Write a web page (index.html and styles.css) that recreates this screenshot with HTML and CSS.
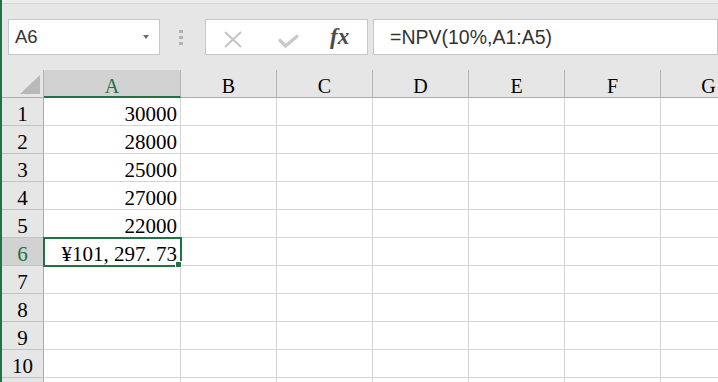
FILE: index.html
```html
<!DOCTYPE html>
<html lang="zh-CN">
<head>
    <meta charset="UTF-8">
    <meta name="viewport" content="width=device-width, initial-scale=1.0">
    <title>NPV</title>
    <link rel="stylesheet" href="styles.css">
</head>
<body>
    <div class="ribbon-edge"></div>
    <div class="formula-bar">
        <div class="name-box">
            <span>A6</span>
            <span class="caret"></span>
        </div>
        <div class="grip"><i></i><i></i><i></i></div>
        <div class="fx-buttons">
            <svg class="cancel" width="18" height="34" viewBox="0 0 18 34">
                <path d="M1 12 L17 27 M17 12 L1 27" stroke="#c4c4c4" stroke-width="2" fill="none"/>
            </svg>
            <svg class="enter" width="21" height="34" viewBox="0 0 21 34">
                <polyline points="1,19.5 7.5,26 20,15.5" stroke="#c9c9c9" stroke-width="3.2" fill="none"/>
            </svg>
            <span class="fx">fx</span>
        </div>
        <div class="formula">=NPV(10%,A1:A5)</div>
    </div>

    <div class="sheet" id="sheet"></div>

    <script>
        const columns = ['A', 'B', 'C', 'D', 'E', 'F', 'G'];
        const data = {
            A1: '30000',
            A2: '28000',
            A3: '25000',
            A4: '27000',
            A5: '22000',
            A6: '¥101, 297. 73'
        };
        const active = { col: 'A', row: 6 };
        const visibleRows = 10;
        const sheet = document.getElementById('sheet');

        function addCell(className, text) {
            const cell = document.createElement('div');
            cell.className = className;
            cell.textContent = text || '';
            sheet.appendChild(cell);
        }

        addCell('corner');
        columns.forEach(col => addCell(col === active.col ? 'col-head active' : 'col-head', col));

        // one extra row peeks in at the bottom edge, without its number
        for (let row = 1; row <= visibleRows + 1; row++) {
            const label = row <= visibleRows ? String(row) : '';
            addCell(row === active.row ? 'row-head active' : 'row-head', label);
            columns.forEach(col => {
                const selected = col === active.col && row === active.row;
                addCell(selected ? 'cell selected' : 'cell', data[col + row]);
            });
        }
    </script>
</body>
</html>
```

FILE: styles.css
```css
body {
    margin: 0;
    width: 718px;
    height: 382px;
    overflow: hidden;
    box-sizing: border-box;
    background: #e6e6e6;
    border-left: 2px solid #217346;
    font-family: "Liberation Sans", Arial, sans-serif;
}
.ribbon-edge {
    height: 3px;
    background: #ececec;
    border-bottom: 1px solid #d4d4d4;
}
.formula-bar {
    display: flex;
    align-items: center;
    height: 66px;
    padding-left: 6px;
}
.name-box {
    width: 152px;
    height: 36px;
    box-sizing: border-box;
    background: white;
    border: 1px solid #c6c6c6;
    display: flex;
    align-items: center;
    justify-content: space-between;
    padding: 0 10px 0 6px;
    font-size: 18.5px;
    color: #333;
}
.caret {
    width: 0;
    height: 0;
    border-left: 3.5px solid transparent;
    border-right: 3.5px solid transparent;
    border-top: 4px solid #6a6a6a;
}
.grip {
    display: flex;
    flex-direction: column;
    gap: 3px;
    margin: 0 22px 0 19px;
}
.grip i {
    display: block;
    width: 4px;
    height: 3px;
    background: #b3b3b3;
}
.fx-buttons {
    width: 163px;
    height: 36px;
    box-sizing: border-box;
    background: white;
    border: 1px solid #c6c6c6;
    display: flex;
    align-items: center;
    padding-left: 18px;
}
.fx-buttons .cancel {
    margin-right: 36px;
}
.fx-buttons .enter {
    margin-right: 31px;
}
.fx {
    font-family: "Liberation Serif", "Times New Roman", serif;
    font-style: italic;
    font-weight: bold;
    font-size: 23px;
    color: #4a4a4a;
}
.formula {
    flex: 1;
    height: 36px;
    box-sizing: border-box;
    margin-left: 5px;
    background: white;
    border: 1px solid #c6c6c6;
    display: flex;
    align-items: center;
    padding-left: 16px;
    font-size: 19.5px;
    color: #333;
}
.sheet {
    display: grid;
    grid-template-columns: 42px 137px repeat(6, 96px);
    grid-auto-rows: 28px;
    height: 312px;
    overflow: hidden;
    background: white;
    font-family: "Liberation Serif", "Times New Roman", serif;
    font-size: 21px;
    color: black;
}
.sheet div {
    box-sizing: border-box;
    border-right: 1px solid #d4d4d4;
    border-bottom: 1px solid #d4d4d4;
    line-height: 22px;
    padding-top: 5px;
    white-space: nowrap;
}
.corner {
    display: flex;
    justify-content: flex-end;
    align-items: flex-end;
    padding: 0 3px 3px 0;
    background: #e6e6e6;
}
.sheet .corner {
    border-right-color: #b4b4b4;
    border-bottom-color: #ababab;
}
.corner::after {
    content: "";
    width: 20px;
    height: 19px;
    background: #b9b9b9;
    clip-path: polygon(100% 0, 100% 100%, 0 100%);
}
.sheet .col-head {
    background: #e6e6e6;
    border-right-color: #b4b4b4;
    border-bottom-color: #ababab;
    text-align: center;
    font-size: 20px;
}
.sheet .col-head.active {
    background: #d2d2d2;
    color: #217346;
    border-bottom: 2px solid #217346;
}
.sheet .row-head {
    background: #e6e6e6;
    border-right-color: #ababab;
    border-bottom-color: #c2c2c2;
    text-align: center;
}
.sheet .row-head.active {
    background: #d2d2d2;
    color: #217346;
}
.cell {
    text-align: right;
    padding-right: 3px;
}
.sheet .cell.selected {
    position: relative;
    z-index: 1;
    outline: 2px solid #217346;
    outline-offset: -1px;
}
.cell.selected::after {
    content: "";
    position: absolute;
    right: -2px;
    bottom: -3px;
    width: 5px;
    height: 5px;
    background: #217346;
    border: 1px solid white;
}
```
